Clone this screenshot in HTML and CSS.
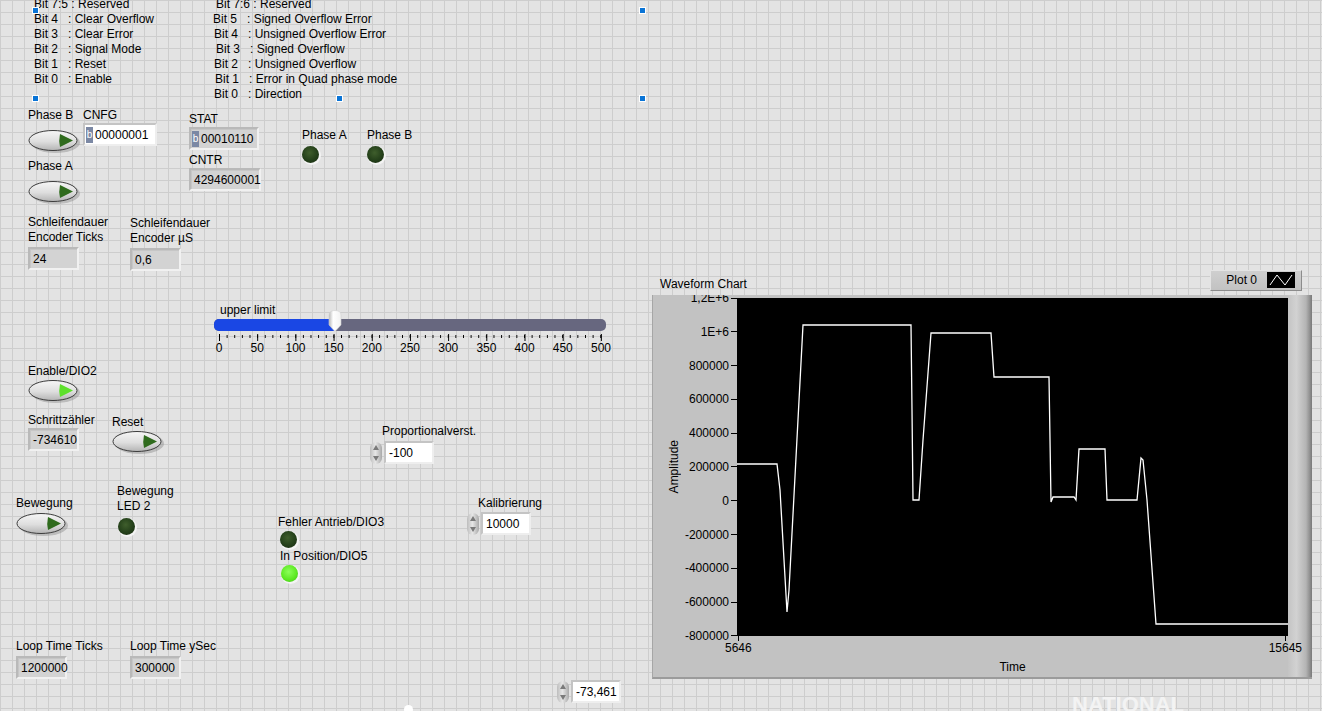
FILE: index.html
```html
<!DOCTYPE html>
<html>

<head>
  <meta charset="utf-8">
  <link rel="stylesheet" href="styles.css">
</head>

<body>

  <div class="panel">

    <svg class="defs" width="0" height="0">
      <defs>
        <linearGradient id="btnFace" x1="0" y1="0" x2="0" y2="1">
          <stop offset="0" stop-color="#f6f6f6" />
          <stop offset="0.55" stop-color="#dedede" />
          <stop offset="1" stop-color="#b4b4b4" />
        </linearGradient>
        <linearGradient id="thumbFace" x1="0" y1="0" x2="1" y2="0">
          <stop offset="0" stop-color="#b8b8b8" />
          <stop offset="0.35" stop-color="#ffffff" />
          <stop offset="1" stop-color="#f2f2f2" />
        </linearGradient>
      </defs>
    </svg>

    <!-- bit descriptions -->
    <div class="notes notes-cnfg">
      <div>Bit 7:5 : Reserved</div>
      <div>Bit 4   : Clear Overflow</div>
      <div>Bit 3   : Clear Error</div>
      <div>Bit 2   : Signal Mode</div>
      <div>Bit 1   : Reset</div>
      <div>Bit 0   : Enable</div>
    </div>

    <div class="notes notes-stat">
      <div class="in3">Bit 7:6 : Reserved</div>
      <div>Bit 5   : Signed Overflow Error</div>
      <div class="in1">Bit 4   : Unsigned Overflow Error</div>
      <div class="in3">Bit 3   : Signed Overflow</div>
      <div class="in1">Bit 2   : Unsigned Overflow</div>
      <div class="in2">Bit 1   : Error in Quad phase mode</div>
      <div class="in1">Bit 0   : Direction</div>
    </div>

    <span class="handle h1"></span>
    <span class="handle h2"></span>
    <span class="handle h3"></span>
    <span class="handle h4"></span>
    <span class="handle h5"></span>

    <!-- booleans -->
    <div class="obj o-phaseb">
      <div class="lbl">Phase B</div>
      <svg class="btn" width="54" height="25" viewBox="0 0 54 25">
        <ellipse cx="27.5" cy="13.5" rx="24.5" ry="10.5" fill="#8c8c8c" opacity="0.45" />
        <ellipse cx="25" cy="11.5" rx="24" ry="10" fill="url(#btnFace)" stroke="#3c3c3c" />
        <path d="M32 5 L45 11.5 L32 18 Q30.5 11.5 32 5 Z" fill="#2f6b1d" />
      </svg>
    </div>

    <div class="obj o-phasea">
      <div class="lbl">Phase A</div>
      <svg class="btn" width="54" height="25" viewBox="0 0 54 25">
        <ellipse cx="27.5" cy="13.5" rx="24.5" ry="10.5" fill="#8c8c8c" opacity="0.45" />
        <ellipse cx="25" cy="11.5" rx="24" ry="10" fill="url(#btnFace)" stroke="#3c3c3c" />
        <path d="M32 5 L45 11.5 L32 18 Q30.5 11.5 32 5 Z" fill="#2f6b1d" />
      </svg>
    </div>

    <div class="obj o-cnfg">
      <div class="lbl">CNFG</div>
      <div class="num ctl w74"><span class="radix">b</span>00000001</div>
    </div>

    <div class="obj o-stat">
      <div class="lbl">STAT</div>
      <div class="num w70"><span class="radix">b</span>00010110</div>
    </div>

    <div class="obj o-cntr">
      <div class="lbl">CNTR</div>
      <div class="num w72">4294600001</div>
    </div>

    <div class="obj o-leda">
      <div class="lbl">Phase A</div>
      <div class="led"></div>
    </div>

    <div class="obj o-ledb">
      <div class="lbl">Phase B</div>
      <div class="led"></div>
    </div>

    <div class="obj o-ticks">
      <div class="lbl">Schleifendauer<br>Encoder Ticks</div>
      <div class="num w51">24</div>
    </div>

    <div class="obj o-us">
      <div class="lbl">Schleifendauer<br>Encoder µS</div>
      <div class="num w51">0,6</div>
    </div>

    <!-- slider -->
    <div class="obj o-slider">
      <div class="lbl slider-lbl">upper limit</div>
      <div class="track">
        <div class="fill"></div>
        <svg class="thumb" width="14" height="22" viewBox="0 0 14 22">
          <path d="M1 5 Q1 0.5 7 0.5 Q13 0.5 13 5 L13 15 L7 21.5 L1 15 Z" fill="url(#thumbFace)" stroke="#d0d0d0" stroke-width="0.6" />
        </svg>
      </div>
      <div class="ticks"></div>
      <div class="scale">
        <span>0</span><span>50</span><span>100</span><span>150</span><span>200</span><span>250</span>
        <span>300</span><span>350</span><span>400</span><span>450</span><span>500</span>
      </div>
    </div>

    <div class="obj o-enable">
      <div class="lbl">Enable/DIO2</div>
      <svg class="btn" width="54" height="25" viewBox="0 0 54 25">
        <ellipse cx="27.5" cy="13.5" rx="24.5" ry="10.5" fill="#8c8c8c" opacity="0.45" />
        <ellipse cx="25" cy="11.5" rx="24" ry="10" fill="url(#btnFace)" stroke="#3c3c3c" />
        <path d="M32 5 L45 11.5 L32 18 Q30.5 11.5 32 5 Z" fill="#5ee02c" />
      </svg>
    </div>

    <div class="obj o-schritt">
      <div class="lbl">Schrittzähler</div>
      <div class="num w51">-734610</div>
    </div>

    <div class="obj o-reset">
      <div class="lbl">Reset</div>
      <svg class="btn" width="54" height="25" viewBox="0 0 54 25">
        <ellipse cx="27.5" cy="13.5" rx="24.5" ry="10.5" fill="#8c8c8c" opacity="0.45" />
        <ellipse cx="25" cy="11.5" rx="24" ry="10" fill="url(#btnFace)" stroke="#3c3c3c" />
        <path d="M32 5 L45 11.5 L32 18 Q30.5 11.5 32 5 Z" fill="#2f6b1d" />
      </svg>
    </div>

    <div class="obj o-prop">
      <div class="lbl">Proportionalverst.</div>
      <div class="spin-row">
        <span class="spin"><i class="up"></i><i class="dn"></i></span>
        <div class="num ctl w50">-100</div>
      </div>
    </div>

    <div class="obj o-beweg">
      <div class="lbl">Bewegung</div>
      <svg class="btn" width="54" height="25" viewBox="0 0 54 25">
        <ellipse cx="27.5" cy="13.5" rx="24.5" ry="10.5" fill="#8c8c8c" opacity="0.45" />
        <ellipse cx="25" cy="11.5" rx="24" ry="10" fill="url(#btnFace)" stroke="#3c3c3c" />
        <path d="M32 5 L45 11.5 L32 18 Q30.5 11.5 32 5 Z" fill="#2f6b1d" />
      </svg>
    </div>

    <div class="obj o-bewled">
      <div class="lbl">Bewegung<br>LED 2</div>
      <div class="led"></div>
    </div>

    <div class="obj o-fehler">
      <div class="lbl">Fehler Antrieb/DIO3</div>
      <div class="led"></div>
    </div>

    <div class="obj o-inpos">
      <div class="lbl">In Position/DIO5</div>
      <div class="led on"></div>
    </div>

    <div class="obj o-kalib">
      <div class="lbl">Kalibrierung</div>
      <div class="spin-row">
        <span class="spin"><i class="up"></i><i class="dn"></i></span>
        <div class="num ctl w50">10000</div>
      </div>
    </div>

    <div class="obj o-loopt">
      <div class="lbl">Loop Time Ticks</div>
      <div class="num w51">1200000</div>
    </div>

    <div class="obj o-loopy">
      <div class="lbl">Loop Time ySec</div>
      <div class="num w51">300000</div>
    </div>

    <div class="obj o-bottom">
      <div class="spin-row">
        <span class="spin"><i class="up"></i><i class="dn"></i></span>
        <div class="num ctl w50">-73,461</div>
      </div>
    </div>

    <!-- waveform chart -->
    <div class="chart">
      <div class="chart-head">
        <span class="chart-title">Waveform Chart</span>
        <div class="legend">
          <span>Plot 0</span>
          <svg class="swatch" width="28" height="16" viewBox="0 0 28 16">
            <rect width="28" height="16" fill="#000" />
            <polyline points="3,13 10,3 18,13 25,3" fill="none" stroke="#fff" stroke-width="1" />
          </svg>
        </div>
      </div>
      <div class="chart-frame">
        <div class="ytitle-cell"><span class="ytitle">Amplitude</span></div>
        <div class="yscale">
          <span>1,2E+6<i></i></span>
          <span>1E+6<i></i></span>
          <span>800000<i></i></span>
          <span>600000<i></i></span>
          <span>400000<i></i></span>
          <span>200000<i></i></span>
          <span>0<i></i></span>
          <span>-200000<i></i></span>
          <span>-400000<i></i></span>
          <span>-600000<i></i></span>
          <span>-800000<i></i></span>
        </div>
        <div class="plot">
          <svg width="551" height="338" viewBox="0 0 551 338">
            <polyline fill="none" stroke="#fff" stroke-width="1.3"
              points="0,166 40,166 43,192 50,314 52,292 66,27 174,27 175,112 176,202 182,202 186,142 194,35 254,35 257,79 312,79 314,204 316,199 337,199 339,202 342,151 368,151 370,202 400,202 404,160 406,162 410,202 419,326 551,326" />
          </svg>
        </div>
        <div class="rbevel"></div>
        <div class="xaxis">
          <div class="xt"><i></i><span>5646</span></div>
          <div class="xt"><i></i><span>15645</span></div>
        </div>
        <div class="xtitle">Time</div>
      </div>
    </div>

    <div class="ni-mark">NATIONAL</div>
    <span class="dot"></span>

  </div>

</body>

</html>
```

FILE: styles.css
```css
* {
  box-sizing: border-box;
}

body {
  margin: 0;
  font-family: "Liberation Sans", Arial, sans-serif;
  font-size: 12px;
  color: #000;
  background: #e3e3e3;
}

.panel {
  position: relative;
  width: 1322px;
  height: 711px;
  overflow: hidden;
  background-color: #e3e3e3;
  background-image:
    linear-gradient(90deg, #cdcdcd 1px, transparent 1px),
    linear-gradient(#cdcdcd 1px, transparent 1px);
  background-size: 12px 12px;
}

.defs {
  position: absolute;
}

/* text notes */
.notes {
  position: absolute;
  line-height: 15px;
}
.notes div {
  white-space: pre;
}
.notes-cnfg { left: 34px; top: -3px; }
.notes-stat { left: 213px; top: -3px; }
.in1 { padding-left: 1px; }
.in2 { padding-left: 2px; }
.in3 { padding-left: 3px; }

.handle {
  position: absolute;
  width: 7px;
  height: 7px;
  background: #0a74d6;
  border: 1px solid #fff;
}
.h1 { left: 32px; top: 7px; }
.h2 { left: 32px; top: 95px; }
.h3 { left: 336px; top: 95px; }
.h4 { left: 639px; top: 7px; }
.h5 { left: 639px; top: 95px; }

/* front panel objects */
.obj {
  position: absolute;
  display: flex;
  flex-direction: column;
  align-items: flex-start;
}
.lbl {
  line-height: 15px;
  white-space: nowrap;
}

.o-phaseb { left: 28px; top: 108px; gap: 6px; }
.o-phasea { left: 28px; top: 159px; gap: 6px; }
.o-cnfg { left: 83px; top: 108px; gap: 0; }
.o-stat { left: 189px; top: 112px; gap: 0; }
.o-cntr { left: 189px; top: 153px; gap: 0; }
.o-leda { left: 302px; top: 128px; gap: 3px; }
.o-ledb { left: 367px; top: 128px; gap: 3px; }
.o-ticks { left: 28px; top: 215px; gap: 2px; }
.o-us { left: 130px; top: 216px; gap: 2px; }
.o-slider { left: 214px; top: 303px; }
.o-enable { left: 28px; top: 364px; gap: 0; }
.o-schritt { left: 28px; top: 413px; gap: 0; }
.o-reset { left: 112px; top: 415px; gap: 0; }
.o-prop { left: 370px; top: 424px; gap: 2px; }
.o-prop .lbl { padding-left: 12px; }
.o-beweg { left: 16px; top: 496px; gap: 1px; }
.o-bewled { left: 117px; top: 484px; gap: 4px; }
.o-bewled .led { margin-left: 1px; }
.o-fehler { left: 278px; top: 515px; gap: 1px; }
.o-fehler .led { margin-left: 2px; }
.o-inpos { left: 280px; top: 549px; gap: 1px; }
.o-inpos .led { margin-left: 1px; }
.o-kalib { left: 467px; top: 496px; gap: 1px; }
.o-kalib .lbl { padding-left: 11px; }
.o-loopt { left: 16px; top: 639px; gap: 2px; }
.o-loopy { left: 130px; top: 639px; gap: 2px; }
.o-bottom { left: 557px; top: 680px; }

.btn {
  display: block;
}

/* numeric controls and indicators */
.num {
  display: flex;
  align-items: center;
  height: 23px;
  padding-left: 3px;
  border: 2px solid;
  border-color: #b9b9b9 #f1f1f1 #f1f1f1 #b9b9b9;
  background: #d3d3d3;
  box-shadow: inset 1px 1px 0 #c6c6c6;
  white-space: nowrap;
}
.num.ctl {
  background: #fff;
  border-color: #c4c4c4 #eeeeee #eeeeee #c4c4c4;
  box-shadow: none;
}
.w50 { width: 50px; }
.w51 { width: 51px; }
.w70 { width: 70px; }
.w72 { width: 72px; }
.w74 { width: 74px; }

.radix {
  display: inline-flex;
  align-items: center;
  justify-content: center;
  width: 7px;
  height: 16px;
  margin: 0 2px 0 -2px;
  background: #7b88a4;
  color: #fff;
  font-size: 10px;
}

.spin-row {
  display: flex;
  align-items: center;
  gap: 2px;
}
.spin {
  display: flex;
  flex-direction: column;
  align-items: center;
  justify-content: space-between;
  width: 12px;
  height: 22px;
  padding: 3px 0;
  border-radius: 6px;
  background: linear-gradient(90deg, #bdbdbd, #e6e6e6 45%, #a9a9a9);
}
.spin i {
  width: 0;
  height: 0;
  border-left: 3px solid transparent;
  border-right: 3px solid transparent;
}
.spin .up { border-bottom: 5px solid #7a7a7a; }
.spin .dn { border-top: 5px solid #7a7a7a; }

/* LEDs */
.led {
  width: 17px;
  height: 17px;
  border-radius: 50%;
  background: radial-gradient(circle at 45% 40%, #3f5e2c 0, #24401a 55%, #17280f 100%);
  box-shadow: 1px 1px 0 1px #f4f4f4;
}
.led.on {
  background: radial-gradient(circle at 45% 40%, #8cff5a 0, #5eea24 55%, #3cbf10 100%);
}

/* slider */
.slider-lbl {
  padding-left: 6px;
}
.track {
  position: relative;
  width: 392px;
  height: 12px;
  margin-top: 1px;
  border-radius: 5px;
  background: #67677f;
}
.fill {
  width: 121px;
  height: 12px;
  border-radius: 5px 0 0 5px;
  background: #1a47e4;
}
.thumb {
  position: absolute;
  left: 114px;
  top: -9px;
}
.ticks {
  width: 384px;
  height: 7px;
  margin: 3px 0 0 5px;
  background:
    linear-gradient(90deg, #000 1px, transparent 1px) 0 0 / 38.2px 7px repeat-x,
    linear-gradient(90deg, #000 1px, transparent 1px) 0 1px / 7.64px 3px repeat-x;
}
.scale {
  display: flex;
  margin-left: -14px;
  line-height: 14px;
}
.scale span {
  flex: 0 0 38.2px;
  text-align: center;
}

/* waveform chart */
.chart {
  position: absolute;
  left: 652px;
  top: 270px;
  width: 660px;
}
.chart-head {
  display: flex;
  align-items: center;
  justify-content: space-between;
  height: 25px;
  padding: 0 10px 4px 8px;
}
.chart-title {
  padding-top: 7px;
}
.legend {
  display: flex;
  align-items: center;
  gap: 10px;
  height: 21px;
  padding: 0 6px 0 15px;
  margin-top: -1px;
  background: linear-gradient(#cfcfcf, #c2c2c2);
  border: 1px solid;
  border-color: #e4e4e4 #8c8c8c #8c8c8c #e4e4e4;
}
.swatch {
  display: block;
}

.chart-frame {
  display: grid;
  grid-template-columns: 24px 60px 551px 1fr;
  grid-template-rows: 3px 338px 1fr;
  height: 384px;
  overflow: hidden;
  background: #c2c2c2;
  border-bottom: 2px solid #9b9b9b;
  border-left: 1px solid #a6a6a6;
}
.ytitle-cell {
  grid-column: 1;
  grid-row: 2;
  display: flex;
  align-items: center;
  padding-left: 14px;
}
.ytitle {
  writing-mode: vertical-rl;
  transform: rotate(180deg);
  line-height: 14px;
}
.yscale {
  grid-column: 2;
  grid-row: 2;
  margin: -6px 0;
  display: flex;
  flex-direction: column;
  justify-content: space-between;
  align-items: flex-end;
  line-height: 12px;
}
.yscale span {
  display: flex;
  align-items: center;
}
.yscale i {
  width: 6px;
  height: 1px;
  margin-left: 2px;
  background: #000;
}
.plot {
  grid-column: 3;
  grid-row: 2;
  background: #000;
}
.plot svg {
  display: block;
}
.rbevel {
  grid-column: 4;
  grid-row: 1 / 4;
  background: linear-gradient(90deg, #c4c4c4, #d2d2d2 35%, #b4b4b4 75%, #7a7a7a);
}
.xaxis {
  grid-column: 3;
  grid-row: 3;
  display: flex;
  justify-content: space-between;
  align-items: flex-start;
  margin: 0 -14px 0 -12px;
  height: 20px;
}
.xt {
  display: flex;
  flex-direction: column;
  align-items: center;
}
.xt i {
  width: 1px;
  height: 5px;
  background: #000;
}
.xt span {
  line-height: 14px;
}
.xtitle {
  grid-column: 3;
  grid-row: 3;
  align-self: start;
  margin-top: 24px;
  text-align: center;
  line-height: 14px;
}

.ni-mark {
  position: absolute;
  left: 1072px;
  top: 692px;
  font: bold 22px "Liberation Sans", Arial, sans-serif;
  color: #f3f3f3;
}
.dot {
  position: absolute;
  left: 404px;
  top: 705px;
  width: 9px;
  height: 9px;
  border-radius: 50%;
  background: #fff;
}
```
